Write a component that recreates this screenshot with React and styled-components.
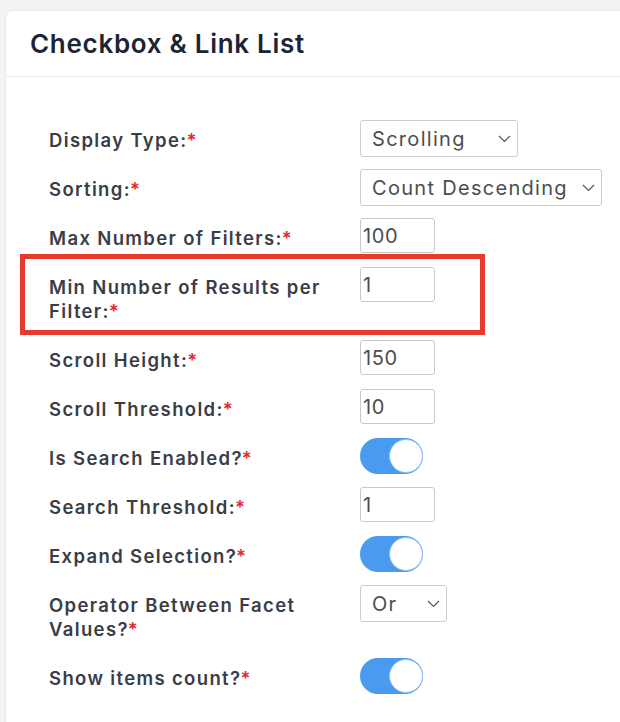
import React from "react";
import styled, { createGlobalStyle } from "styled-components";

const Global = createGlobalStyle`
  html, body { margin: 0; padding: 0; background: #f3f3f4; overflow: hidden; }
  * { box-sizing: border-box; }
`;

const Page = styled.div`
  padding: 10px 0 0 5px;
  width: 620px;
  height: 722px;
  overflow: hidden;
  font-family: Inter, "Noto Sans", sans-serif;
`;

const Card = styled.section`
  width: 660px;
  min-height: 760px;
  background: #ffffff;
  border: 1px solid #e8e8ea;
  border-radius: 7px;
`;

const Header = styled.header`
  height: 66px;
  display: flex;
  align-items: center;
  padding-left: 24px;
  border-bottom: 1px solid #ececee;
`;

const Title = styled.h2`
  margin: 0;
  font-size: 26px;
  font-weight: 600;
  color: #1d2434;
  letter-spacing: 0.7px;
`;

const Body = styled.div`
  padding: 43px 0 0 43px;
`;

const Row = styled.div`
  position: relative;
  display: flex;
  align-items: flex-start;
  margin-bottom: 9px;
`;

const Label = styled.label`
  width: 311px;
  flex: none;
  padding: 8px 20px 8px 0;
  font-size: 18.5px;
  line-height: 24px;
  font-weight: 600;
  letter-spacing: 1.35px;
  color: #3a3d47;
`;

const Req = styled.span`
  color: #e5262b;
  margin-left: -1px;
`;

const SelectWrap = styled.div`
  position: relative;
  width: ${(p) => p.$w}px;
  height: 37px;
`;

const Select = styled.select`
  appearance: none;
  width: 100%;
  height: 100%;
  border: 1px solid #cdcdd0;
  border-radius: 3px;
  background: #fff;
  padding: 0 24px 0 11px;
  font-family: Inter, "Noto Sans", sans-serif;
  font-size: 20px;
  letter-spacing: 1.3px;
  color: #4d4d4f;
`;

const Chevron = styled.svg`
  position: absolute;
  right: 7px;
  top: 15px;
  pointer-events: none;
`;

const Input = styled.input`
  width: 75px;
  height: 35px;
  border: 1px solid #c9c9cc;
  border-radius: 3px;
  padding: 0 2px;
  font-family: Inter, "Noto Sans", sans-serif;
  font-size: 20px;
  letter-spacing: 0.6px;
  color: #4d4d4f;
  background: #fff;
`;

const Toggle = styled.div`
  position: relative;
  width: 63px;
  height: 36px;
  border-radius: 18px;
  background: #4a9af0;
`;

const Knob = styled.span`
  position: absolute;
  right: 0;
  top: 1px;
  width: 34px;
  height: 34px;
  border-radius: 50%;
  background: #fff;
  border: 1px solid #8cc0f6;
`;

const Highlight = styled.div`
  position: absolute;
  left: -29px;
  top: -13px;
  width: 465px;
  height: 81px;
  border: 5px solid #e63a2e;
  pointer-events: none;
`;

const Field = ({ label, children, highlight }) => (
  <Row>
    <Label>
      {label}
      <Req>*</Req>
    </Label>
    {children}
    {highlight && <Highlight />}
  </Row>
);

const Dropdown = ({ w, value }) => (
  <SelectWrap $w={w}>
    <Select defaultValue={value}>
      <option>{value}</option>
    </Select>
    <Chevron width="13" height="8" viewBox="0 0 13 8">
      <path d="M1 1l5.5 5.5L12 1" fill="none" stroke="#555" strokeWidth="1.2" />
    </Chevron>
  </SelectWrap>
);

const Switch = () => (
  <Toggle>
    <Knob />
  </Toggle>
);

export default function App() {
  return (
    <>
      <Global />
      <Page>
        <Card>
          <Header>
            <Title>Checkbox &amp; Link List</Title>
          </Header>
          <Body>
            <Field label="Display Type:">
              <Dropdown w={158} value="Scrolling" />
            </Field>
            <Field label="Sorting:">
              <Dropdown w={242} value="Count Descending" />
            </Field>
            <Field label="Max Number of Filters:">
              <Input defaultValue="100" />
            </Field>
            <Field label="Min Number of Results per Filter:" highlight>
              <Input defaultValue="1" />
            </Field>
            <Field label="Scroll Height:">
              <Input defaultValue="150" />
            </Field>
            <Field label="Scroll Threshold:">
              <Input defaultValue="10" />
            </Field>
            <Field label="Is Search Enabled?">
              <Switch />
            </Field>
            <Field label="Search Threshold:">
              <Input defaultValue="1" />
            </Field>
            <Field label="Expand Selection?">
              <Switch />
            </Field>
            <Field label="Operator Between Facet Values?">
              <Dropdown w={87} value="Or" />
            </Field>
            <Field label="Show items count?">
              <Switch />
            </Field>
          </Body>
        </Card>
      </Page>
    </>
  );
}
